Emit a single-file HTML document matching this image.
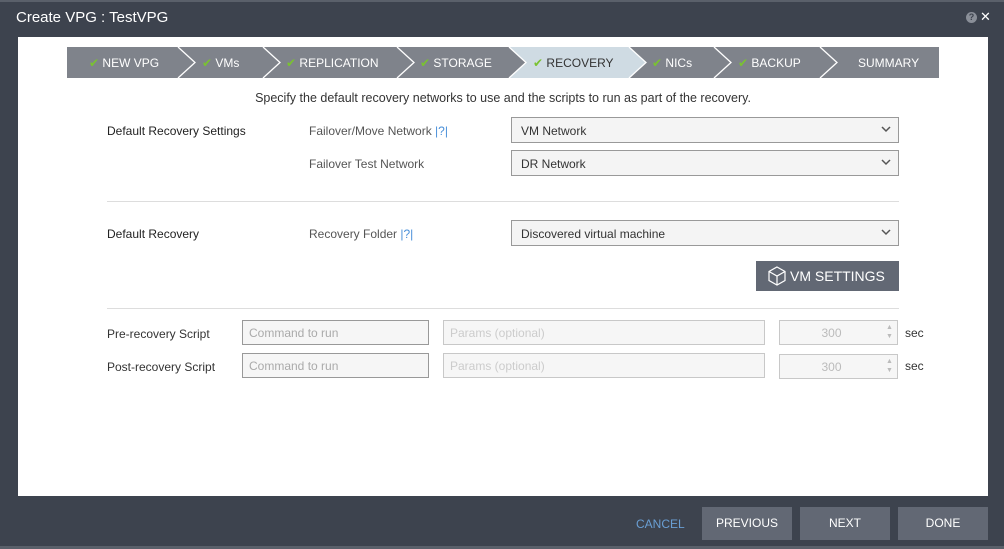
<!DOCTYPE html>
<html><head><style>
*{margin:0;padding:0;box-sizing:border-box}
body{width:1004px;height:549px;background:#3d434e;font-family:"Liberation Sans",sans-serif;position:relative;overflow:hidden}
.a{position:absolute}
.t{font-size:12px;color:#333;white-space:nowrap}
.dd{position:absolute;left:511px;width:388px;height:26px;border:1px solid #999;background:#f4f4f4;font-size:12px;color:#333;padding:6px 9px}
.dd svg{position:absolute;right:7px;top:8px}
.in{position:absolute;height:25px;border:1px solid #c8c8c8;background:#f6f6f6;font-size:12px;color:#bbb;padding:5px 6px}
.btn{position:absolute;top:507px;height:33px;width:90px;background:#626874;color:#fff;font-size:12px;text-align:center;line-height:33px}
.st{position:absolute;top:56px;font-size:12px;color:#fff;white-space:nowrap}
.st b{color:#7ac231;font-weight:normal}
</style></head><body>
<div class="a" style="left:0;top:0;width:1004px;height:2px;background:#5a606a"></div>
<div class="a" style="left:16px;top:9px;font-size:15px;color:#fff">Create VPG : TestVPG</div>
<div class="a" style="left:966px;top:12px;width:11px;height:11px;border-radius:50%;background:#8a8f98;color:#3d434e;font-size:9px;text-align:center;line-height:11px;font-weight:bold">?</div>
<div class="a" style="left:980px;top:9px;color:#fff;font-size:13px">✕</div>
<div class="a" style="left:18px;top:37px;width:970px;height:459px;background:#fff"></div>
<svg class="a" style="left:0;top:0" width="1004" height="100">
<rect x="67" y="47" width="872" height="31" fill="#7f838b"/>
<polygon points="509,47 629,47 646,62.5 629,78 509,78 526,62.5" fill="#cfdbe3"/>
<g fill="none" stroke="#fff" stroke-width="1.3">
<polyline points="178,47 195,62.5 178,78"/><polyline points="263,47 280,62.5 263,78"/>
<polyline points="397,47 414,62.5 397,78"/><polyline points="509,47 526,62.5 509,78"/>
<polyline points="629,47 646,62.5 629,78"/><polyline points="714,47 731,62.5 714,78"/>
<polyline points="820,47 837,62.5 820,78"/></g></svg>
<div class="st" style="left:89px"><b>✔</b> NEW VPG</div>
<div class="st" style="left:202px"><b>✔</b> VMs</div>
<div class="st" style="left:286px"><b>✔</b> REPLICATION</div>
<div class="st" style="left:420px"><b>✔</b> STORAGE</div>
<div class="st" style="left:533px;color:#333"><b>✔</b> RECOVERY</div>
<div class="st" style="left:652px"><b>✔</b> NICs</div>
<div class="st" style="left:738px"><b>✔</b> BACKUP</div>
<div class="st" style="left:858px">SUMMARY</div>
<div class="a t" style="left:0;width:1004px;text-align:center;top:91px;font-size:12.5px;padding-left:2px">Specify the default recovery networks to use and the scripts to run as part of the recovery.</div>
<div class="a t" style="left:107px;top:124px;color:#222">Default Recovery Settings</div>
<div class="a t" style="left:309px;top:124px;color:#555">Failover/Move Network <span style="color:#4a90d9">|?|</span></div>
<div class="a t" style="left:309px;top:157px;color:#555">Failover Test Network</div>
<div class="dd" style="top:117px">VM Network<svg width="10" height="7"><polyline points="1,1 5,5 9,1" fill="none" stroke="#555" stroke-width="1.5"/></svg></div>
<div class="dd" style="top:150px">DR Network<svg width="10" height="7"><polyline points="1,1 5,5 9,1" fill="none" stroke="#555" stroke-width="1.5"/></svg></div>
<div class="a" style="left:107px;top:201px;width:792px;height:1px;background:#ddd"></div>
<div class="a t" style="left:107px;top:227px;color:#222">Default Recovery</div>
<div class="a t" style="left:309px;top:227px;color:#555">Recovery Folder <span style="color:#4a90d9">|?|</span></div>
<div class="dd" style="top:220px">Discovered virtual machine<svg width="10" height="7"><polyline points="1,1 5,5 9,1" fill="none" stroke="#555" stroke-width="1.5"/></svg></div>
<div class="a" style="left:756px;top:261px;width:143px;height:30px;background:#626874;color:#fff;font-size:14px;line-height:30px;padding-left:34px">VM SETTINGS</div>
<svg class="a" style="left:767px;top:265px" width="20" height="22"><g fill="none" stroke="#fff" stroke-width="1.2"><polygon points="10,2 18,6.5 18,15.5 10,20 2,15.5 2,6.5"/><polyline points="2,6.5 10,11 18,6.5"/><line x1="10" y1="11" x2="10" y2="20"/></g></svg>
<div class="a" style="left:107px;top:308px;width:792px;height:1px;background:#ddd"></div>
<div class="a t" style="left:107px;top:327px">Pre-recovery Script</div>
<div class="a t" style="left:107px;top:360px">Post-recovery Script</div>
<div class="in" style="left:242px;top:320px;width:187px;border-color:#999;color:#aaa">Command to run</div>
<div class="in" style="left:242px;top:353px;width:187px;border-color:#999;color:#aaa">Command to run</div>
<div class="in" style="left:443px;top:320px;width:322px;color:#ccc">Params (optional)</div>
<div class="in" style="left:443px;top:353px;width:322px;color:#ccc">Params (optional)</div>
<div class="in" style="left:779px;top:320px;width:119px;text-align:center;color:#bbb;padding-right:20px">300</div>
<div class="in" style="left:779px;top:354px;width:119px;text-align:center;color:#bbb;padding-right:20px">300</div>
<div class="a" style="left:886px;top:323px;font-size:7px;color:#bbb;line-height:9px">▲<br>▼</div>
<div class="a" style="left:886px;top:357px;font-size:7px;color:#bbb;line-height:9px">▲<br>▼</div>
<div class="a t" style="left:905px;top:326px">sec</div>
<div class="a t" style="left:905px;top:359px">sec</div>
<div class="a" style="left:636px;top:517px;font-size:12px;color:#6a9fd4">CANCEL</div>
<div class="btn" style="left:702px">PREVIOUS</div>
<div class="btn" style="left:800px">NEXT</div>
<div class="btn" style="left:898px">DONE</div>
<div class="a" style="left:0;top:546px;width:1004px;height:3px;background:#5a606a"></div>
</body></html>
